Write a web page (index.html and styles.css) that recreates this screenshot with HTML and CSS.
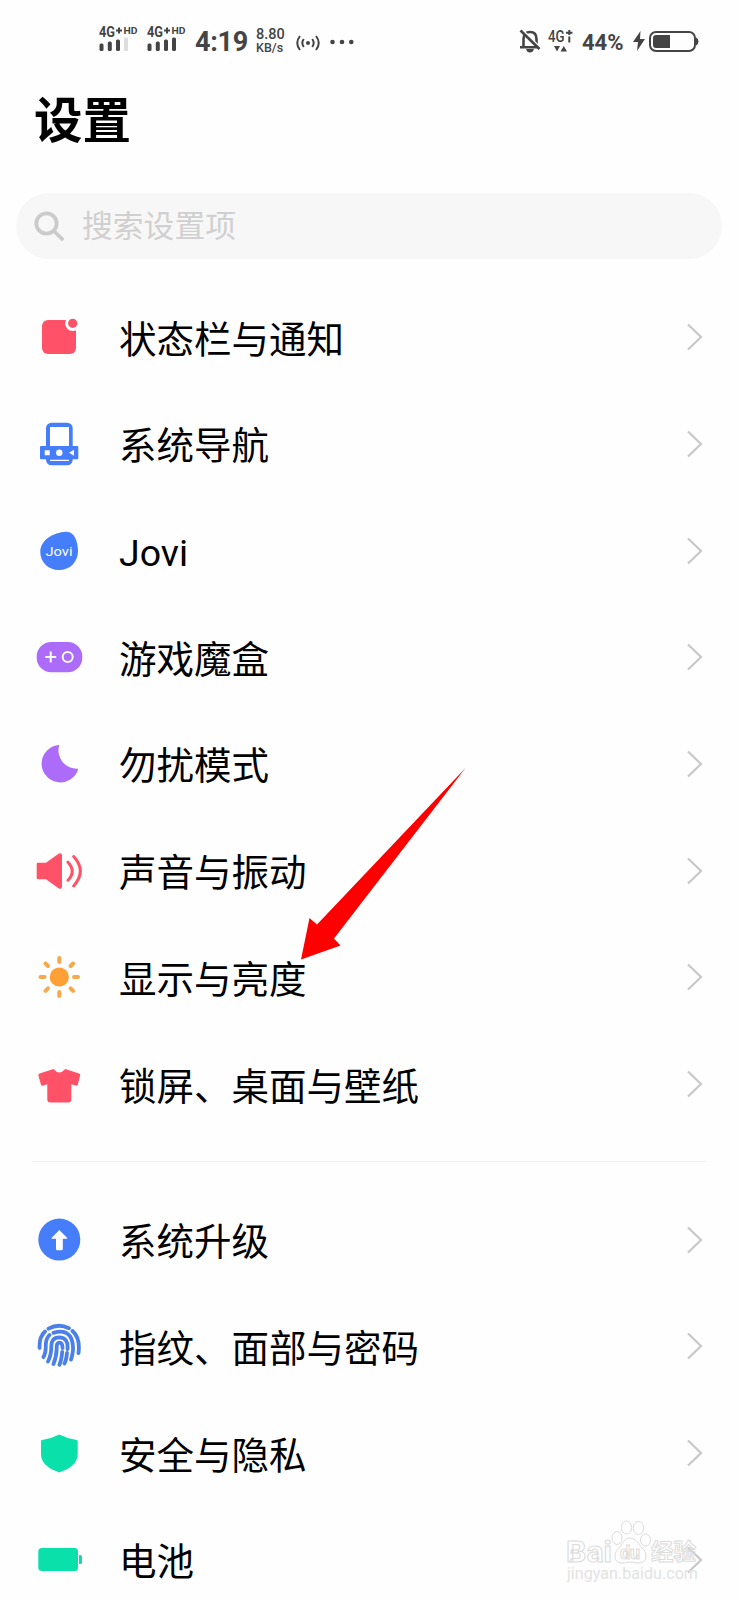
FILE: index.html
```html
<!DOCTYPE html>
<html lang="zh-CN">
<head>
	<meta charset="utf-8"/>
	<title>设置</title>
	<link rel="stylesheet" href="styles.css">
</head>
<body>
<div class="phone">
	<header class="status-bar">
		<div class="status-left">
			<svg class="signal" width="42" height="30" viewBox="0 0 42 30">
				<text class="net" x="0" y="13" textLength="16" lengthAdjust="spacingAndGlyphs">4G</text>
				<path class="line" d="M17 6.5h6M20 3.5v6"/>
				<text class="hd" x="24.500" y="10" textLength="14" lengthAdjust="spacingAndGlyphs">HD</text>
				<rect x="0.500" y="19.500" width="4" height="7.500" rx="1.500"/>
				<rect x="8.800" y="17.500" width="4" height="9.500" rx="1.500"/>
				<rect x="17" y="15.500" width="4" height="11.500" rx="1.500"/>
				<rect class="off" x="25" y="13.500" width="4" height="13.500" rx="1"/>
			</svg>
			<svg class="signal" width="42" height="30" viewBox="0 0 42 30">
				<text class="net" x="0" y="13" textLength="16" lengthAdjust="spacingAndGlyphs">4G</text>
				<path class="line" d="M17 6.500h6M20 3.500v6"/>
				<text class="hd" x="24.500" y="10" textLength="14" lengthAdjust="spacingAndGlyphs">HD</text>
				<rect x="0.500" y="19.500" width="4" height="7.500" rx="1.500"/>
				<rect x="8.800" y="17.500" width="4" height="9.500" rx="1.500"/>
				<rect x="17" y="15.500" width="4" height="11.500" rx="1.500"/>
				<rect x="25" y="13.500" width="4" height="13.500" rx="1.500"/>
			</svg>
			<span class="clock">4:19</span>
			<span class="speed"><b>8.80</b><b>KB/s</b></span>
			<svg class="hotspot" width="24" height="18" viewBox="0 0 24 18">
				<circle cx="12" cy="9" r="2"/>
				<path class="line" d="M7.800 5q-3 4 0 8M16.200 5q3 4 0 8M4 2q-5.500 7 0 14M20 2q5.500 7 0 14"/>
			</svg>
			<svg class="dots" width="24" height="6" viewBox="0 0 24 6">
				<circle cx="2.500" cy="3" r="2.300"/><circle cx="12" cy="3" r="2.300"/><circle cx="21.300" cy="3" r="2.300"/>
			</svg>
		</div>
		<div class="status-right">
			<svg class="mute" width="22" height="26" viewBox="0 0 22 26">
				<path class="line bell" d="M4.500 19V11C4.500 6 7 4 11 4s6.500 2 6.500 7v8M1 19.300h19"/>
				<path d="M7 21h8q-1 3.500-4 3.500T7 21z"/>
				<path class="gap" d="M3 1.500L22 20.500"/>
				<path class="line bell" d="M1.500 2.500L20.500 21"/>
			</svg>
			<svg class="data" width="26" height="26" viewBox="0 0 26 26">
				<text class="net thin" x="0" y="14" textLength="16.500" lengthAdjust="spacingAndGlyphs">4G</text>
				<path class="line" d="M18 4.800h6.500M21.300 2v5M21.300 8.500v6"/>
				<path d="M6 18h6l-3 5.500zM12.500 23.500h6.500l-3.200-5.500z"/>
			</svg>
			<span class="percent">44%</span>
			<svg class="bolt" width="12" height="20" viewBox="0 0 12 20"><path d="M7.500 0L0 11h5L4 20 12 8H7z"/></svg>
			<svg class="power" width="50" height="21" viewBox="0 0 50 21">
				<rect class="line" x="1" y="1" width="45" height="19" rx="6"/>
				<path d="M7 4h14v13H7q-3 0-3-3V7q0-3 3-3zM47 6.500q2.500 1 2.500 4t-2.500 4z"/>
			</svg>
		</div>
	</header>

	<h1 class="title">设置</h1>

	<div class="search">
		<svg width="30" height="30" viewBox="0 0 30 30"><circle cx="12.500" cy="12.500" r="10.200"/><path d="M20 20l8 8"/></svg>
		<span>搜索设置项</span>
	</div>

	<ul class="list">
		<li class="item">
			<svg class="icon red" viewBox="0 0 48 48">
				<rect x="7" y="7" width="34" height="34" rx="6"/>
				<circle class="white" cx="37.700" cy="10.300" r="7.600"/>
				<circle cx="37.700" cy="10.300" r="4.600"/>
			</svg>
			<span class="label">状态栏与通知</span>
			<svg class="arrow" viewBox="0 0 16 28"><path d="M1 1.500L14 14 1 26.500"/></svg>
		</li>
		<li class="item">
			<svg class="icon blue" viewBox="0 0 48 48">
				<rect x="11" y="2.700" width="26.700" height="42.600" rx="5.500"/>
				<rect x="5" y="26" width="38.300" height="13.300" rx="1"/>
				<path class="white" d="M15 7h19v19H15zM9.700 30.200h5v5h-5zM34 32.700l5-3v6zM15 39.700h19v1.200H15z"/>
				<circle class="white" cx="24.300" cy="32.700" r="3.200"/>
			</svg>
			<span class="label">系统导航</span>
			<svg class="arrow" viewBox="0 0 16 28"><path d="M1 1.500L14 14 1 26.500"/></svg>
		</li>
		<li class="item">
			<svg class="icon blue" viewBox="0 0 48 48">
				<path d="M31 4.700C39 4 43 14 43 24c0 11-8 19-19 19S5.300 35 5.300 25C5.300 13 18 5.500 31 4.700z"/>
				<text class="jovi" x="10.500" y="29" textLength="27" lengthAdjust="spacingAndGlyphs">Jovi</text>
			</svg>
			<span class="label">Jovi</span>
			<svg class="arrow" viewBox="0 0 16 28"><path d="M1 1.500L14 14 1 26.500"/></svg>
		</li>
		<li class="item">
			<svg class="icon purple" viewBox="0 0 48 48">
				<rect x="1.700" y="9" width="45.600" height="30.300" rx="14.500"/>
				<path class="white-line" d="M10.200 24h11M15.700 18.500v11"/>
				<circle class="white-line" cx="32.700" cy="24" r="5"/>
			</svg>
			<span class="label">游戏魔盒</span>
			<svg class="arrow" viewBox="0 0 16 28"><path d="M1 1.500L14 14 1 26.500"/></svg>
		</li>
		<li class="item">
			<svg class="icon purple" viewBox="0 0 48 48">
				<path d="M24.300 5A18.700 18.700 0 1 0 43.300 28.700A18.300 18.300 0 0 1 24.300 5z"/>
			</svg>
			<span class="label">勿扰模式</span>
			<svg class="arrow" viewBox="0 0 16 28"><path d="M1 1.500L14 14 1 26.500"/></svg>
		</li>
		<li class="item">
			<svg class="icon red" viewBox="0 0 48 48">
				<path d="M3 15.700h8L23.500 6.800Q27 5 27 8.500v31Q27 43 23.500 41.200L11 32.300H3q-1.300 0-1.300-1.300V17q0-1.300 1.300-1.300z"/>
				<path class="wave" d="M33 15.200q8.500 9 0 18M38.700 9.500q13.300 14.500 0 29.400"/>
			</svg>
			<span class="label">声音与振动</span>
			<svg class="arrow" viewBox="0 0 16 28"><path d="M1 1.500L14 14 1 26.500"/></svg>
		</li>
		<li class="item">
			<svg class="icon orange" viewBox="0 0 48 48">
				<circle cx="24.300" cy="24" r="9.600"/>
				<path class="rays" d="M24.300 5v4M24.300 39v4M5.500 24h4M39 24h4M10.500 10.500l2.500 2.500M35.600 35.300l2.500 2.500M38.100 10.500l-2.500 2.500M13 35.300l-2.500 2.500"/>
			</svg>
			<span class="label">显示与亮度</span>
			<svg class="arrow" viewBox="0 0 16 28"><path d="M1 1.500L14 14 1 26.500"/></svg>
		</li>
		<li class="item">
			<svg class="icon red" viewBox="0 0 48 48">
				<path d="M18.500 9q5.800 7 11.700 0L44 13.600q1.500.5 1.200 2L42.700 24.700q-.4 1.300-2 .9L36.300 24.300V39.500q0 2.900-3 2.900H15.300q-3 0-3-2.900V24.300L8 25.600q-1.600.4-2-.9L3.400 15.600q-.3-1.500 1.200-2z"/>
			</svg>
			<span class="label">锁屏、桌面与壁纸</span>
			<svg class="arrow" viewBox="0 0 16 28"><path d="M1 1.500L14 14 1 26.500"/></svg>
		</li>
	</ul>

	<hr class="divider">

	<ul class="list">
		<li class="item">
			<svg class="icon blue" viewBox="0 0 48 48">
				<circle cx="24.300" cy="23.600" r="21"/>
				<path class="white" d="M24.300 14l8 8q.3.700-.5.700h-4V33q0 1.200-1.200 1.200h-4.400q-1.200 0-1.200-1.200V22.700h-4q-.8 0-.5-.7z"/>
			</svg>
			<span class="label">系统升级</span>
			<svg class="arrow" viewBox="0 0 16 28"><path d="M1 1.500L14 14 1 26.500"/></svg>
		</li>
		<li class="item">
			<svg class="icon blue" viewBox="0 0 48 48">
				<path class="finger" d="M13.500 6.700Q23.500 1 34 6.200M10 9.500Q4 15 4.600 26M37.500 9Q45.500 16 43.500 31M18.500 10.900Q32 6.500 36.500 17 39 24 37.500 31.500 37 35 36 37.500M14.500 13Q10.500 17 10.800 24 10.800 31 8.500 35M32.500 27Q33.500 15.500 24.300 15.300 16 15.500 16.300 25 16.300 33 13 39.500M32 31Q31.300 38 29.500 41.500M27.500 26Q27.500 20.600 24.500 20.600 21.500 20.600 21.700 26 21.500 35 18.500 42M27.200 30Q26.500 38 24.500 42.700"/>
			</svg>
			<span class="label">指纹、面部与密码</span>
			<svg class="arrow" viewBox="0 0 16 28"><path d="M1 1.500L14 14 1 26.500"/></svg>
		</li>
		<li class="item">
			<svg class="icon green" viewBox="0 0 48 48">
				<path d="M24.300 5.400Q33 9.700 41.500 11q1.200.2 1.200 1.500V25c0 9-7 14.500-18.400 18.400C13 39.500 6 34 6 25V12.500Q6 11.200 7.200 11 15.700 9.700 24.300 5.400z"/>
			</svg>
			<span class="label">安全与隐私</span>
			<svg class="arrow" viewBox="0 0 16 28"><path d="M1 1.500L14 14 1 26.500"/></svg>
		</li>
		<li class="item">
			<svg class="icon green" viewBox="0 0 48 48">
				<rect x="3.300" y="12" width="39.700" height="23" rx="3.500"/>
				<path d="M44 19h1.500q1.500 0 1.500 1.500v6q0 1.500-1.500 1.500H44z"/>
			</svg>
			<span class="label">电池</span>
			<svg class="arrow" viewBox="0 0 16 28"><path d="M1 1.500L14 14 1 26.500"/></svg>
		</li>
	</ul>

	<!-- pointer to the display entry -->
	<svg class="pointer" viewBox="0 0 166 194"><path d="M164.500 0L16 156.500 8.500 150 0 191.500 39.500 177.500 33 170.500z"/></svg>

	<svg class="watermark" viewBox="0 0 140 70">
		<text class="wm-outline" x="0" y="42.500" font-size="29" textLength="46" lengthAdjust="spacingAndGlyphs">Bai</text>
		<g class="wm-paw">
			<path d="M64 19c-6 0-8 7-12 11s-5 13 3 14c4 .5 5-1 9-1s6 1.500 10 1c8-1 7-10 3-14s-7-11-13-11z"/>
			<ellipse cx="51" cy="19" rx="5" ry="6.500"/>
			<ellipse cx="60.500" cy="8.500" rx="5.200" ry="6.500"/>
			<ellipse cx="72.500" cy="9" rx="5.200" ry="6.500"/>
			<ellipse cx="79.500" cy="21" rx="5" ry="6"/>
		</g>
		<text class="wm-outline" x="54" y="40" font-size="18" textLength="20" lengthAdjust="spacingAndGlyphs">du</text>
		<text class="wm-outline" x="85" y="41" font-size="23" textLength="45" lengthAdjust="spacingAndGlyphs">经验</text>
		<text class="wm-url" x="1" y="60" textLength="131" lengthAdjust="spacingAndGlyphs">jingyan.baidu.com</text>
	</svg>
</div>
</body>
</html>
```
FILE: styles.css
```css
*{
	box-sizing: border-box;
}
body{
	margin: 0;
	background: #fefefe;
	color: #000;
	font-family: Roboto, "Noto Sans CJK SC", sans-serif;
}
svg{
	display: block;
	flex: none;
}

.phone{
	position: relative;
	width: 738px;
	height: 1600px;
	overflow: hidden;
}

/* status bar */
.status-bar{
	display: flex;
	justify-content: space-between;
	height: 84px;
	padding: 0 39px 0 99px;
	color: #444;
	fill: #444;
}
.status-left,
.status-right{
	display: flex;
	align-items: center;
	height: 82px;
}
.signal{
	margin: 0 6px 5px 0;
}
.status-bar .line{
	fill: none;
	stroke: #444;
	stroke-width: 2;
}
.status-bar .bell{
	stroke-width: 2.6;
}
.gap{
	stroke: #fefefe;
	stroke-width: 2;
}
.net{
	font-size: 14px;
	font-weight: 700;
}
.thin{
	font-size: 16px;
	font-weight: 500;
}
.hd{
	font-size: 9.5px;
	font-weight: 700;
}
.off{
	fill: #ddd;
}
.clock{
	width: 61px;
	padding-top: 2px;
	font-size: 27px;
	font-weight: 700;
	letter-spacing: -0.3px;
}
.speed{
	display: flex;
	flex-direction: column;
	width: 40px;
	font-size: 14.5px;
	line-height: 13px;
}
.speed b{
	font-weight: 500;
}
.speed b + b{
	font-size: 12.5px;
}
.hotspot{
	margin: 4px 10px 0 0;
}
.dots{
	margin-top: 2px;
}
.mute{
	margin-right: 7px;
}
.data{
	margin-right: 8px;
}
.percent{
	width: 51px;
	padding-top: 2px;
	font-size: 22px;
	font-weight: 700;
}
.bolt{
	margin-right: 4px;
}

.title{
	height: 109px;
	margin: 0;
	padding: 8px 0 0 34px;
	font-size: 48.5px;
	font-weight: 700;
	line-height: 60px;
}

.search{
	display: flex;
	align-items: center;
	height: 65.5px;
	margin: 0 16px;
	padding-left: 18px;
	border-radius: 33px;
	background: #f7f7f7;
	color: #d0d0d0;
	font-size: 30.8px;
	line-height: 36px;
}
.search svg{
	margin-right: 18px;
	fill: none;
	stroke: #cbcbcb;
	stroke-width: 3.8;
	stroke-linecap: round;
}
.search span{
	padding-top: 2px;
}

/* settings rows */
.list{
	margin: 0;
	padding: 0;
	list-style: none;
}
.search + .list{
	padding-top: 25.4px;
}
.item{
	display: flex;
	align-items: center;
	height: 106.7px;
	padding: 0 35px;
}
.icon{
	width: 48px;
	height: 48px;
	margin-right: 36px;
}
.label{
	flex: 1;
	padding-top: 5px;
	font-size: 37.5px;
	line-height: 44px;
}
.arrow{
	width: 16px;
	height: 28px;
	fill: none;
	stroke: #c8c8c8;
	stroke-width: 2.2;
}
.divider{
	height: 1px;
	margin: 23.5px 32px 24.5px;
	border: 0;
	background: #f2f2f2;
}

.red{ fill: #ff5168; }
.blue{ fill: #457dfa; }
.purple{ fill: #ac6bf8; }
.orange{ fill: #fea035; }
.green{ fill: #0ae1aa; }
.white{ fill: #fff; }
.white-line{
	fill: none;
	stroke: #fff;
	stroke-width: 2;
}
.jovi{
	fill: #fff;
	font-size: 12px;
	font-weight: 400;
}
.wave{
	fill: none;
	stroke: #ff5168;
	stroke-width: 3;
	stroke-linecap: round;
}
.rays{
	stroke: #f5a94a;
	stroke-width: 4;
	stroke-linecap: round;
}
.finger{
	fill: none;
	stroke: #4a80e8;
	stroke-width: 3.8;
	stroke-linecap: round;
}

.pointer{
	position: absolute;
	left: 301px;
	top: 767.5px;
	width: 166px;
	height: 194px;
	fill: #fe0000;
}
.watermark{
	position: absolute;
	left: 566px;
	top: 1519px;
	width: 140px;
	height: 70px;
}
.wm-outline,
.wm-paw{
	fill: none;
	stroke: #dcdcdc;
	stroke-width: 1;
	font-weight: 700;
}
.wm-url{
	fill: #e3e3e3;
	font-size: 16px;
}
```
